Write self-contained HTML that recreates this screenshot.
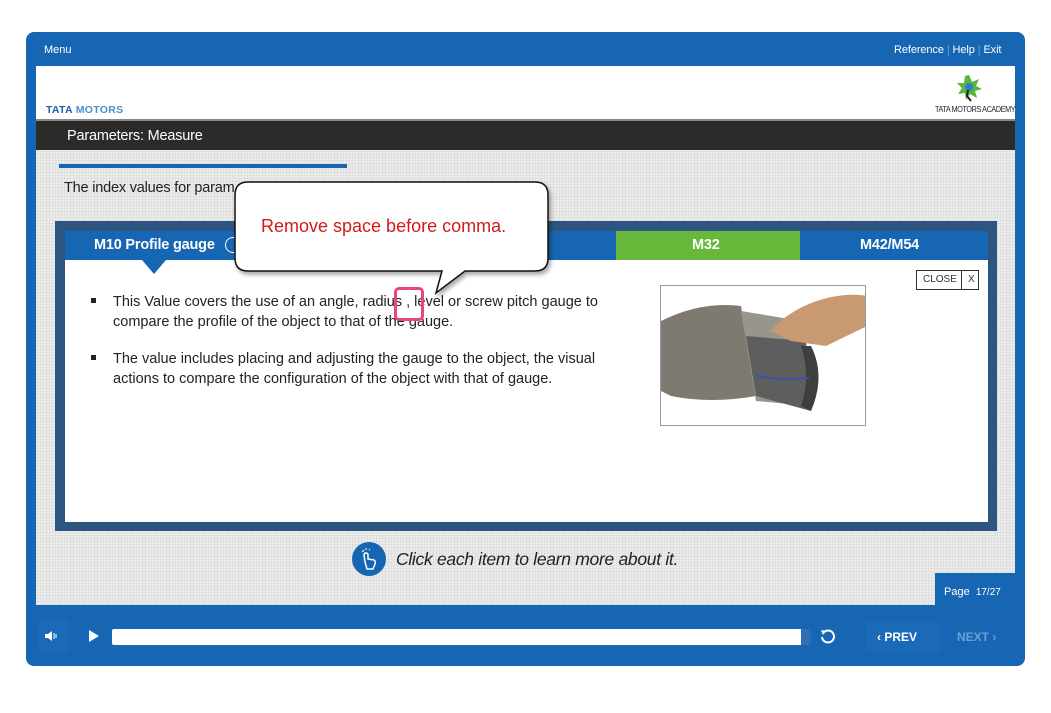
<!DOCTYPE html>
<html><head><meta charset="utf-8"><style>
*{margin:0;padding:0;box-sizing:border-box}
body{width:1051px;height:713px;background:#fff;position:relative;overflow:hidden;font-family:"Liberation Sans",sans-serif}
.a{position:absolute}
.frame{left:26px;top:32px;width:999px;height:634px;background:#1766b3;border-radius:8px}
.top{color:#fff;font-size:11px;top:44px}
.hdr{left:36px;top:66px;width:979px;height:55px;background:#fff;border-bottom:2px solid #888}
.bar{left:36px;top:121px;width:979px;height:29px;background:#2b2b2b;color:#fff;font-size:14.5px;padding:7px 0 0 31px;letter-spacing:-0.2px}
.gray{left:36px;top:150px;width:979px;height:455px;background:#ececec;background-image:radial-gradient(#d8d8d8 0.8px,transparent 0.9px);background-size:3px 3px}
.txt{font-size:14.5px;color:#222;letter-spacing:-0.2px}
.panel{left:55px;top:221px;width:942px;height:310px;background:#2c5580}
.tabs{left:65px;top:231px;width:923px;height:29px;background:#1766b3}
.content{left:65px;top:260px;width:923px;height:262px;background:#fff}
.tab{color:#fff;font-weight:bold;font-size:14.5px;top:237px;letter-spacing:-0.2px}
.li{font-size:14.5px;color:#222;line-height:20px;left:113px;width:600px;letter-spacing:0;white-space:nowrap}
.bul{width:5px;height:5px;background:#222;left:91px}
</style></head><body>
<div class="a frame"></div>
<div class="a top" style="left:44px">Menu</div>
<div class="a top" style="left:894px;letter-spacing:-0.1px">Reference <span style="color:#6a9fd6">|</span> Help <span style="color:#6a9fd6">|</span> Exit</div>
<div class="a hdr"></div>
<div class="a" style="left:46px;top:104px;font-weight:bold;font-size:10.5px;color:#1e5ea8;letter-spacing:0.3px">TATA <span style="color:#4a90d0">MOTORS</span></div>
<svg class="a" style="left:955px;top:74px" width="28" height="28" viewBox="0 0 28 28"><polygon points="14,1 17,8 24,5 21,12 27,15 20,17 22,24 15,20 11,26 10,19 3,20 7,14 2,9 9,9 10,2" fill="#5ab53e"/><circle cx="14" cy="13" r="4" fill="#2f7fc8"/><path d="M13 16 L12 22 L16 27" stroke="#222" stroke-width="2" fill="none"/></svg>
<div class="a" style="left:935px;top:105px;font-size:8px;color:#222;letter-spacing:-0.4px;white-space:nowrap;transform:scaleX(0.9);transform-origin:left">TATA MOTORS ACADEMY</div>
<div class="a bar">Parameters: Measure</div>
<div class="a gray"></div>
<div class="a" style="left:59px;top:164px;width:288px;height:4px;background:#1766b3"></div>
<div class="a txt" style="left:64px;top:180px">The index values for param</div>
<div class="a panel"></div>
<div class="a tabs"></div>
<div class="a" style="left:616px;top:231px;width:184px;height:29px;background:#67b83b"></div>
<div class="a tab" style="left:94px">M10 Profile gauge</div>
<div class="a" style="left:225px;top:237px;width:16px;height:16px;border:1.5px solid #fff;border-radius:50%"></div>
<div class="a tab" style="left:692px">M32</div>
<div class="a tab" style="left:860px">M42/M54</div>
<div class="a content"></div>
<div class="a" style="left:142px;top:260px;width:0;height:0;border-left:12px solid transparent;border-right:12px solid transparent;border-top:14px solid #1766b3"></div>
<div class="a bul" style="top:298px"></div>
<div class="a li" style="top:292px">This Value covers the use of an angle, radius , level or screw pitch gauge to<br>compare the profile of the object to that of the gauge.</div>
<div class="a bul" style="top:355px"></div>
<div class="a li" style="top:349px">The value includes placing and adjusting the gauge to the object, the visual<br>actions to compare the configuration of the object with that of gauge.</div>
<div class="a" style="left:916px;top:270px;width:63px;height:20px;border:1px solid #333;font-size:10px;color:#333;background:#fff"><span class="a" style="left:6px;top:3px">CLOSE</span><span class="a" style="left:44px;top:0;height:18px;border-left:1px solid #333;padding:3px 0 0 6px">X</span></div>
<div class="a" style="left:660px;top:285px;width:206px;height:141px;border:1px solid #999;background:#fff;overflow:hidden">
<svg width="206" height="141"><path d="M0 35 Q40 15 80 20 L95 110 Q50 118 10 110 L0 105Z" fill="#7e7a72"/><path d="M80 25 L140 35 L150 120 L95 115Z" fill="#9a958c"/><path d="M85 50 L145 55 L150 125 L95 110Z" fill="#5e5e5e"/><path d="M150 60 Q165 90 150 125 L140 120 Q150 90 140 60Z" fill="#3e3e3e"/><path d="M110 45 C135 15 180 5 206 10 L206 40 L165 60 L130 55Z" fill="#c99a72"/><path d="M95 90 Q120 95 148 92" stroke="#3a52a8" stroke-width="2" fill="none"/></svg></div>
<div class="a" style="left:394px;top:287px;width:30px;height:34px;border:3px solid #e8467c;border-radius:5px"></div>
<svg class="a" style="left:230px;top:178px" width="330" height="120"><path d="M18 4 H305 Q318 4 318 17 V80 Q318 93 305 93 H235 L206 115 L212 93 H18 Q5 93 5 80 V17 Q5 4 18 4Z" fill="#fff" stroke="#111" stroke-width="1.5" style="filter:drop-shadow(2px 3px 2px rgba(0,0,0,.35))"/></svg>
<div class="a" style="left:261px;top:216px;font-size:18px;color:#d41a1a">Remove space before comma.</div>
<div class="a" style="left:352px;top:542px;width:34px;height:34px;border-radius:50%;background:#1766b3"></div>
<svg class="a" style="left:352px;top:542px" width="34" height="34"><path d="M13 20 L12 13 Q12 11 14 11 Q16 11 16 13 L16 17 L22 18 Q24 19 23 22 L21 27 L15 27 Z" fill="none" stroke="#fff" stroke-width="1.5"/><path d="M10 10 L12 8 M14 6 L14 8 M17 8 L18 7" stroke="#fff" stroke-width="1"/></svg>
<div class="a" style="left:396px;top:549px;font-size:17.5px;font-style:italic;color:#222;letter-spacing:-0.3px">Click each item to learn more about it.</div>
<div class="a" style="left:935px;top:573px;width:80px;height:32px;background:#1766b3;color:#fff;font-size:11px;padding:13px 0 0 9px">Page&nbsp; <span style="font-size:10px">17/27</span></div>
<div class="a" style="left:38px;top:620px;width:30px;height:32px;background:#1a6ab8"></div>
<svg class="a" style="left:44px;top:629px" width="16" height="14"><path d="M1 5 H4 L8 2 V12 L4 9 H1Z" fill="#fff"/><path d="M10 4 V10 M12 5 V9" stroke="#fff"/></svg>
<svg class="a" style="left:88px;top:629px" width="12" height="14"><path d="M1 1 L11 7 L1 13Z" fill="#fff"/></svg>
<div class="a" style="left:112px;top:629px;width:699px;height:16px;background:#fff;border-radius:2px;border-right:10px solid #2d6fb0"></div>
<svg class="a" style="left:819px;top:628px" width="18" height="18"><path d="M5 4 A6 6 0 1 1 3 9" fill="none" stroke="#fff" stroke-width="2"/><path d="M2 2 L7 3 L4 7Z" fill="#fff"/></svg>
<div class="a" style="left:866px;top:622px;width:74px;height:30px;background:#1a6ab8"></div>
<div class="a" style="left:877px;top:630px;color:#fff;font-weight:bold;font-size:12px">‹ PREV</div>
<div class="a" style="left:957px;top:630px;color:#6d9fd3;font-weight:bold;font-size:12px">NEXT ›</div>
</body></html>
